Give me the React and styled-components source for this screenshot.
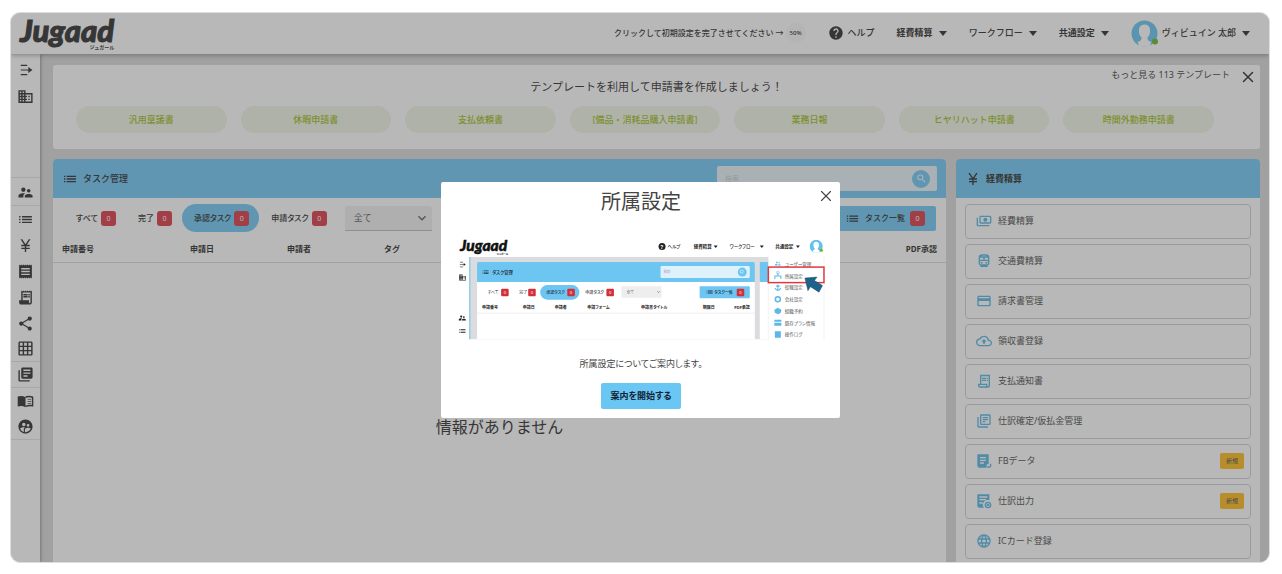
import React from 'react';
import styled, { createGlobalStyle } from 'styled-components';
import { X } from 'lucide-react';
import {
  MdDomain,
  MdSupervisorAccount,
  MdList,
  MdCurrencyYen,
  MdReceipt,
  MdReceiptLong,
  MdOutlineReceiptLong,
  MdShare,
  MdGridOn,
  MdLibraryBooks,
  MdSupervisedUserCircle,
  MdHelp,
  MdOutlinePayments,
  MdOutlineDirectionsTransit,
  MdPayment,
  MdOutlineCloudUpload,
  MdOutlineLibraryBooks,
  MdLanguage,
  MdSearch,
  MdKeyboardArrowDown,
} from 'react-icons/md';

const FbIcon = () => (
  <svg viewBox='0 0 24 24' width='1em' height='1em' fill='none'>
    <path fill='currentColor' d='M2 2h17v15h-3v5H5a3 3 0 0 1-3-3z' />
    <path stroke='#fff' strokeWidth='2' d='M6 7h9M6 11h9M6 15h6' />
    <path stroke='currentColor' strokeWidth='2' d='M17 21h3a2 2 0 0 0 2-2v-3' />
  </svg>
);

const ExportIcon = () => (
  <svg viewBox='0 0 24 24' width='1em' height='1em' fill='none'>
    <path fill='currentColor' d='M2 2h18v9a7 7 0 0 0-8 11H5a3 3 0 0 1-3-3z' />
    <path stroke='#fff' strokeWidth='2' d='M5 6h12M5 10h10M5 15h5' />
    <circle cx='18' cy='18' r='4' stroke='currentColor' strokeWidth='2' />
    <path stroke='currentColor' strokeWidth='2' d='M16 18h4M18 16v4' />
  </svg>
);

const ExpandIcon = () => (
  <svg viewBox='0 0 24 24' width='1em' height='1em' fill='none'>
    <path stroke='currentColor' strokeWidth='2' d='M3 4h11M3 12h14M3 20h11' />
    <path fill='currentColor' d='M16 7l7 5-7 5z' />
  </svg>
);

const BookIcon = () => (
  <svg viewBox='0 0 24 24' width='1em' height='1em' fill='none'>
    <path fill='currentColor' d='M1 5q6-2 11 1v14q-5-3-11-1z' />
    <path stroke='currentColor' strokeWidth='2' d='M12 6q5-2 10 0v12q-5-1-10 1' />
    <path stroke='currentColor' strokeWidth='1' d='M15 9h5M15 12h5M15 15h5' />
  </svg>
);

const Avatar = () => (
  <svg viewBox='0 0 54 54' width='27' height='27'>
    <circle cx='27' cy='27' r='26' fill='#62c2ee' />
    <path
      fill='#fff'
      d='M27 9c-8 0-12 6-11 14 0 6 2 9 5 12 0 5-1 7-8 9l4 9h20l4-9c-7-2-8-4-8-9 3-3 5-6 5-12 1-8-3-14-11-14z'
    />
    <circle cx='48' cy='43' r='6' fill='#62b51f' />
  </svg>
);

const templates = [
  '汎用稟議書',
  '休暇申請書',
  '支払依頼書',
  '[備品・消耗品購入申請書]',
  '業務日報',
  'ヒヤリハット申請書',
  '時間外勤務申請書',
];

const sideLinks = [
  { label: 'ユーザー', icon: <MdSupervisorAccount />, line: true },
  { label: 'タスク', icon: <MdList /> },
  { label: '経費', icon: <MdCurrencyYen /> },
  { label: '領収書', icon: <MdReceipt /> },
  { label: '請求書', icon: <MdReceiptLong /> },
  { label: '共有', icon: <MdShare /> },
  { label: '一覧', icon: <MdGridOn />, line: true },
  { label: '書類', icon: <MdLibraryBooks />, line: true },
  { label: 'マニュアル', icon: <BookIcon /> },
  { label: 'グループ', icon: <MdSupervisedUserCircle />, line: true },
];

const tabs = ['すべて', '完了', '承認タスク', '申請タスク'];

const expenseLinks = [
  { label: '経費精算', icon: <FlippedPayments /> },
  { label: '交通費精算', icon: <MdOutlineDirectionsTransit /> },
  { label: '請求書管理', icon: <MdPayment /> },
  { label: '領収書登録', icon: <MdOutlineCloudUpload /> },
  { label: '支払通知書', icon: <MdOutlineReceiptLong /> },
  { label: '仕訳確定/仮払金管理', icon: <MdOutlineLibraryBooks /> },
  { label: 'FBデータ', icon: <FbIcon />, isNew: true },
  { label: '仕訳出力', icon: <ExportIcon />, isNew: true },
  { label: 'ICカード登録', icon: <MdLanguage /> },
];

// the stack of notes sits on the left side
function FlippedPayments() {
  return (
    <svg viewBox='0 0 24 24' width='1em' height='1em'>
      <g transform='matrix(-1 0 0 1 24 0)'>
        <MdOutlinePayments size='24' />
      </g>
    </svg>
  );
}

// [text, x, y, size, weight, colour]
const tourTexts = [
  ['ヘルプ', 420, 20, 9, 500, '#222'],
  ['経費精算', 472, 20, 9, 700, '#222'],
  ['ワークフロー', 544, 20, 9, 500, '#222'],
  ['共通設定', 635, 20, 9, 700, '#222'],
  ['タスク管理', 70, 71, 9, 500, '#223'],
  ['検索', 412, 70, 7, 400, '#9ab'],
  ['すべて', 61, 111, 8, 400, '#333'],
  ['完了', 124, 111, 8, 400, '#333'],
  ['承認タスク', 178, 111, 8, 500, '#234'],
  ['申請タスク', 256, 111, 8, 500, '#333'],
  ['全て', 338, 111, 8, 400, '#777'],
  ['タスク一覧', 513, 111, 8, 500, '#123'],
  ['申請番号', 50, 142, 8, 700, '#222'],
  ['申請日', 131, 142, 8, 700, '#222'],
  ['申請者', 195, 142, 8, 700, '#222'],
  ['申請フォーム', 260, 142, 8, 700, '#222'],
  ['申請書タイトル', 367, 142, 8, 700, '#222'],
  ['期限日', 490, 142, 8, 700, '#222'],
  ['PDF承認', 553, 142, 8, 700, '#222'],
];

const tourMenu = [
  'ユーザー管理',
  '所属設定',
  '役職設定',
  '会社設定',
  '組織予約',
  '既存プラン情報',
  '操作ログ',
];

const TourPicture = () => (
  <Picture viewBox='0 0 736 204' role='img' aria-label='共通設定メニューの所属設定'>
    <text x='6' y='25' fontFamily='Lato' fontSize='31' fontWeight='900' fontStyle='italic' stroke='#111' fill='#111'>
      Jugaad
    </text>
    <text x='79' y='33' fontSize='5' fontWeight='700'>ジュガール</text>
    <circle cx='409' cy='17' r='7' fill='#222' />
    <text x='406' y='21' fontSize='11' fontWeight='700' fill='#fff'>?</text>
    {[516, 608, 680].map((x) => (
      <path key={x} d={`M${x - 4} 15h8l-4 5z`} fill='#222' />
    ))}
    <svg x='703' y='3' width='27' height='27' viewBox='0 0 27 27'>
      <Avatar />
    </svg>
    <path fill='#dcdcde' d='M24 38h598v164H24z' />
    <path fill='#8fd0ea' d='M24 38h3v164h-3z' />
    <path fill='#fff' d='M40 87h554v115H40zM604 87h18v115h-18z' />
    <path fill='#6dc6f2' d='M40 51a3 3 0 0 1 3-3h548a3 3 0 0 1 3 3v37H40zM604 48h18v40h-18z' />
    <rect x='406' y='56' width='178' height='24' rx='2' fill='#dff1fa' />
    <circle cx='569' cy='68' r='9' fill='#6dc6f2' />
    <circle cx='568' cy='67' r='3' fill='none' stroke='#fff' />
    <rect x='166' y='94' width='78' height='29' rx='14' fill='#6dc6f2' />
    <path fill='#eee' d='M328 96h80v23h-80z' />
    <path fill='none' stroke='#555' d='M399 106l3 3 3-3' />
    <rect x='484' y='96' width='100' height='24' rx='2' fill='#6dc6f2' />
    {[88, 142, 220, 298, 558].map((x) => (
      <g key={x}>
        <rect x={x} y='101' width='15' height='15' rx='2' fill='#d32f3b' />
        <text x={x + 5} y='111' fontSize='8' fill='#fff'>0</text>
      </g>
    ))}
    <path stroke='#ddd' d='M40 150h554' />
    <g color='#234'>
      <MdList x='49' y='60' size='16' />
      <MdList x='496' y='100' size='16' />
    </g>
    <g color='#222' fontSize='14'>
      <svg x='4' y='46' width='14' height='14' viewBox='0 0 14 14'>
        <ExpandIcon />
      </svg>
      <MdDomain x='3' y='71' size='16' />
      <MdSupervisorAccount x='2' y='151' size='17' />
      <MdList x='2' y='177' size='17' />
    </g>
    {tourTexts.map(([text, x, y, size, weight, fill]) => (
      <text key={text} x={x} y={y} fontSize={size} fontWeight={weight} fill={fill}>
        {text}
      </text>
    ))}
    <path fill='#fff' d='M621 36h111v168H621z' />
    <path fill='none' stroke='#e8e8e8' d='M621 36v168M732 36v168' />
    {tourMenu.map((text, i) => (
      <text key={text} x='654' y={Math.round(55 + i * 23.5)} fontSize='9' fill='#555'>
        {text}
      </text>
    ))}
    <g color='#5cb8e6'>
      <MdSupervisorAccount x='633' y='44' size='14' />
      <path stroke='currentColor' fill='none' strokeWidth='2' d='M640 69v7M634 82v-6h12v6M640 93v12M634 100q6 9 12 0M636 96h8' />
      <circle cx='640' cy='69' r='3' fill='none' stroke='currentColor' />
      <circle cx='640' cy='122' r='5' fill='none' stroke='currentColor' strokeWidth='3' />
      <path fill='currentColor' d='M633 143l7-4 7 4-1 6-6 3-6-3zM633 163h14v4h-14zM633 169h14v6h-14zM634 186h12v13h-12z' />
    </g>
    <rect x='621' y='58' width='111' height='31' fill='none' stroke='#e0393e' strokeWidth='3' />
    <path fill='#1d6288' stroke='#184f70' d='M694 80l24-2-5 7 16 10-7 13-17-11-5 8z' />
  </Picture>
);

const Logo = () => (
  <LogoBox href='#'>
    <LogoName>Jugaad</LogoName>
    <LogoSub>ジュガール</LogoSub>
  </LogoBox>
);

const App = () => {
  return (
    <Frame>
      <GlobalStyle />
      <Header>
        <Logo />
        <TopNav>
          <SetupLink href='#'>
            クリックして初期設定を完了させてください →<Progress>50%</Progress>
          </SetupLink>
          <NavButton>
            <MdHelp size={16} />
            ヘルプ
          </NavButton>
          <NavButton $bold>
            経費精算
            <Caret />
          </NavButton>
          <NavButton>
            ワークフロー
            <Caret />
          </NavButton>
          <NavButton $bold>
            共通設定
            <Caret />
          </NavButton>
          <NavButton>
            <Avatar />
            ヴィビュイン 太郎
            <Caret />
          </NavButton>
        </TopNav>
      </Header>
      <Body>
        <Sidebar>
          <SideButton aria-label='メニューを開く' $small>
            <ExpandIcon />
          </SideButton>
          <SideButton aria-label='会社'>
            <MdDomain />
          </SideButton>
          <SideGroup>
            {sideLinks.map(({ label, icon, line }) => (
              <SideButton key={label} aria-label={label} $line={line}>
                {icon}
              </SideButton>
            ))}
          </SideGroup>
        </Sidebar>
        <Main>
          <TemplateCard>
            <TemplateTop>
              <TemplateTitle>テンプレートを利用して申請書を作成しましょう！</TemplateTitle>
              <TemplateMore>
                <MoreLink href='#'>もっと見る 113 テンプレート</MoreLink>
                <IconButton aria-label='閉じる'>
                  <X size={18} />
                </IconButton>
              </TemplateMore>
            </TemplateTop>
            <Chips>
              {templates.map((name) => (
                <Chip key={name}>{name}</Chip>
              ))}
            </Chips>
          </TemplateCard>
          <Columns>
            <Card>
              <CardHeader>
                <MdList size={16} />
                <CardTitle>タスク管理</CardTitle>
                <Search>
                  <SearchInput aria-label='検索' placeholder='検索' />
                  <SearchButton aria-label='検索する'>
                    <MdSearch size={11} />
                  </SearchButton>
                </Search>
              </CardHeader>
              <Toolbar>
                {tabs.map((tab) => (
                  <Tab key={tab} $active={tab === '承認タスク'}>
                    {tab}
                    <Count>0</Count>
                  </Tab>
                ))}
                <SelectBox>
                  <Select aria-label='タグ'>
                    <option>全て</option>
                  </Select>
                  <MdKeyboardArrowDown size={16} />
                </SelectBox>
                <TaskListButton>
                  <MdList size={15} />
                  タスク一覧
                  <Count>0</Count>
                </TaskListButton>
              </Toolbar>
              <Table>
                <thead>
                  <tr>
                    <Th $width='128px'>申請番号</Th>
                    <Th $width='97px'>申請日</Th>
                    <Th $width='97px'>申請者</Th>
                    <Th>タグ</Th>
                    <Th $end>PDF承認</Th>
                  </tr>
                </thead>
                <tbody>
                  <tr>
                    <EmptyCell colSpan={5}>情報がありません</EmptyCell>
                  </tr>
                </tbody>
              </Table>
            </Card>
            <Card>
              <CardHeader>
                <MdCurrencyYen size={16} />
                <CardTitle $bold>経費精算</CardTitle>
              </CardHeader>
              <LinkList>
                {expenseLinks.map(({ label, icon, isNew }) => (
                  <LinkItem key={label} href='#'>
                    <LinkIcon>{icon}</LinkIcon>
                    {label}
                    {isNew && <NewBadge>新規</NewBadge>}
                  </LinkItem>
                ))}
              </LinkList>
            </Card>
          </Columns>
        </Main>
      </Body>
      <Backdrop>
        <Modal role='dialog' aria-labelledby='tour-title'>
          <ModalClose aria-label='閉じる'>
            <X size={18} strokeWidth={1.5} />
          </ModalClose>
          <ModalTitle id='tour-title'>所属設定</ModalTitle>
          <TourPicture />
          <ModalText>所属設定についてご案内します。</ModalText>
          <StartButton>案内を開始する</StartButton>
        </Modal>
      </Backdrop>
    </Frame>
  );
};

export default App;

const GlobalStyle = createGlobalStyle`
  :root {
    --clr-blue: #6ac6f3;
    --clr-text: #222;
    --clr-muted: #555;
    --clr-red: #d9303e;
  }
  * {
    box-sizing: border-box;
  }
  body {
    margin: 0;
    padding: 12px 12px 11px 10px;
    background: #fff;
    color: var(--clr-text);
    font: 9px/14px 'Noto Sans', 'Noto Sans CJK JP', sans-serif;
  }
  button, input, select {
    font: inherit;
    color: inherit;
    border: 0;
    margin: 0;
    padding: 0;
    background: none;
  }
  button {
    cursor: pointer;
  }
  a {
    color: inherit;
    text-decoration: none;
  }
  svg {
    flex-shrink: 0;
  }
`;

const Frame = styled.div`
  position: relative;
  overflow: hidden;
  border: 1px solid #ddd;
  border-radius: 10px;
  background: #d9d9d9;
`;

const Header = styled.header`
  display: flex;
  align-items: center;
  justify-content: space-between;
  height: 41px;
  padding: 0 19px 1px 9px;
  background: #fff;
  /* keeps the shadow above the page body */
  position: relative;
  z-index: 1;
  box-shadow: 0 1px 5px rgba(0, 0, 0, 0.4);
`;

const LogoBox = styled.a`
  display: flex;
  flex-direction: column;
  align-items: flex-end;
`;

const LogoName = styled.span`
  font: italic 900 31px/28px Lato, sans-serif;
  -webkit-text-stroke: 1px currentColor;
`;

const LogoSub = styled.span`
  font-size: 5px;
  font-weight: 700;
  line-height: 6px;
`;

const TopNav = styled.nav`
  display: flex;
  align-items: center;
  gap: 22px;
`;

const SetupLink = styled.a`
  display: flex;
  align-items: center;
  gap: 2px;
  font-size: 8px;
  font-weight: 500;
`;

const Progress = styled.span`
  width: 20px;
  height: 20px;
  border-radius: 50%;
  background: #f8f8f8;
  font-size: 6px;
  line-height: 20px;
  text-align: center;
`;

const NavButton = styled.button`
  display: flex;
  align-items: center;
  gap: 4px;
  font-weight: ${({ $bold }) => ($bold ? 700 : 500)};
`;

const Caret = styled.span`
  margin-left: 2px;
  border: 4px solid transparent;
  border-top: 5px solid currentColor;
  border-bottom: 0;
`;

const Body = styled.div`
  display: flex;
`;

const Sidebar = styled.aside`
  flex: 0 0 29px;
  padding-top: 3px;
  background: #fff;
  box-shadow: 1px 0 3px rgba(0, 0, 0, 0.35);
`;

const SideButton = styled.button`
  display: flex;
  align-items: center;
  justify-content: center;
  width: 100%;
  height: 26px;
  font-size: ${({ $small }) => ($small ? '14px' : '17px')};
  border-bottom: ${({ $line }) => ($line ? '1px solid #e4e4e4' : '0')};
`;

const SideGroup = styled.div`
  margin-top: 68px;
  padding-top: 2px;
  border-top: 1px solid #e4e4e4;
`;

const Main = styled.main`
  flex: 1;
  min-width: 0;
  padding: 11px 9px 0 13px;
  display: grid;
  gap: 10px;
`;

const TemplateCard = styled.section`
  padding: 3px 46px 16px 23px;
  border-radius: 3px;
  background: #fff;
`;

const TemplateTop = styled.div`
  display: grid;
  grid-template-columns: 1fr auto 1fr;
  margin: 0 -43px 0 -20px;
`;

const TemplateTitle = styled.h2`
  grid-column: 2;
  margin: 11px 0 0;
  font-size: 11px;
  font-weight: 400;
  line-height: 16px;
`;

const TemplateMore = styled.div`
  display: flex;
  align-items: flex-start;
  justify-content: flex-end;
  gap: 9px;
`;

const MoreLink = styled.a`
  color: #333;
`;

const IconButton = styled.button`
  display: flex;
`;

const Chips = styled.div`
  display: grid;
  grid-template-columns: repeat(7, 1fr);
  gap: 14px;
  margin-top: 11px;
`;

const Chip = styled.button`
  height: 27px;
  border-radius: 14px;
  background: #f0f5e6;
  color: #98bb10;
  font-weight: 500;
`;

const Columns = styled.div`
  display: grid;
  grid-template-columns: minmax(0, 1fr) 304px;
  gap: 10px;
`;

const Card = styled.section`
  border-radius: 4px 4px 0 0;
  background: #fff;
  overflow: hidden;
`;

const CardHeader = styled.div`
  display: flex;
  align-items: center;
  gap: 5px;
  height: 39px;
  padding: 0 9px;
  background: var(--clr-blue);
`;

const CardTitle = styled.h2`
  margin: 0;
  font-size: 9px;
  font-weight: ${({ $bold }) => ($bold ? 700 : 500)};
`;

const Search = styled.div`
  display: flex;
  align-items: center;
  width: 220px;
  height: 25px;
  margin-left: auto;
  padding: 0 7px 0 8px;
  border-radius: 2px;
  background: #e8f4fa;
`;

const SearchInput = styled.input`
  flex: 1;
  min-width: 0;
  font-size: 7px;
  outline: none;
  &::placeholder {
    color: #c0ccd2;
  }
`;

const SearchButton = styled.button`
  display: flex;
  align-items: center;
  justify-content: center;
  width: 18px;
  height: 18px;
  border-radius: 50%;
  background: var(--clr-blue);
  color: #fff;
`;

const Toolbar = styled.div`
  display: flex;
  align-items: center;
  padding: 6px 10px 5px 11px;
`;

const Tab = styled.button`
  display: flex;
  align-items: center;
  gap: 3px;
  height: 28px;
  padding: 0 10px 0 12px;
  border-radius: 14px;
  background: ${({ $active }) => ($active ? 'var(--clr-blue)' : 'none')};
  font-size: 8px;
  font-weight: 500;
  font-feature-settings: 'palt';
`;

const Count = styled.span`
  width: 15px;
  height: 15px;
  border-radius: 3px;
  background: var(--clr-red);
  color: #fff;
  font-size: 7px;
  font-weight: 400;
  line-height: 15px;
  text-align: center;
`;

const SelectBox = styled.div`
  display: flex;
  align-items: center;
  width: 87px;
  height: 25px;
  margin-left: 8px;
  padding: 0 2px 0 9px;
  border-bottom: 1px solid #bbb;
  border-radius: 3px 3px 0 0;
  background: #f0f0f0;
  color: var(--clr-muted);
`;

const Select = styled.select`
  flex: 1;
  min-width: 0;
  appearance: none;
`;

const TaskListButton = styled.button`
  display: flex;
  align-items: center;
  gap: 5px;
  height: 25px;
  margin-left: auto;
  padding: 0 11px 0 18px;
  border-radius: 2px;
  background: var(--clr-blue);
  font-size: 8px;
  font-weight: 500;
`;

const Table = styled.table`
  width: 100%;
  border-collapse: collapse;
  table-layout: fixed;
`;

const Th = styled.th`
  width: ${({ $width }) => $width || 'auto'};
  height: 25px;
  padding: 0 9px;
  border-bottom: 1px solid #d8d8d8;
  font-size: 8px;
  font-weight: 700;
  text-align: ${({ $end }) => ($end ? 'right' : 'left')};
`;

const EmptyCell = styled.td`
  padding: 152px 0 0;
  font-size: 16px;
  line-height: 24px;
  text-align: center;
`;

const LinkList = styled.div`
  display: grid;
  gap: 5px;
  padding: 6px 9px 3px;
`;

const LinkItem = styled.a`
  display: flex;
  align-items: center;
  gap: 6px;
  height: 35px;
  padding: 0 6px 1px 10px;
  border: 1px solid #ccc;
  border-radius: 4px;
  color: #444;
`;

const LinkIcon = styled.span`
  display: flex;
  color: #4fb4e4;
  font-size: 16px;
`;

const NewBadge = styled.span`
  width: 24px;
  height: 16px;
  margin-left: auto;
  border-radius: 2px;
  background: #ffb812;
  font-size: 6px;
  line-height: 16px;
  text-align: center;
`;

/* covers the whole frame */
const Backdrop = styled.div`
  position: absolute;
  inset: 0;
  z-index: 2;
  display: flex;
  align-items: center;
  justify-content: center;
  padding-top: 25px;
  background: rgba(82, 82, 82, 0.41);
`;

const Modal = styled.section`
  position: relative;
  display: flex;
  flex-direction: column;
  align-items: center;
  width: 399px;
  padding: 6px 14px 9px 16px;
  border-radius: 2px;
  background: #fff;
  color: #444;
  font-feature-settings: 'palt';
`;

const ModalClose = styled.button`
  position: absolute;
  top: 5px;
  right: 5px;
  display: flex;
`;

const ModalTitle = styled.h1`
  margin: 0 0 22px;
  font-size: 20px;
  font-weight: 400;
  line-height: 28px;
`;

const Picture = styled.svg`
  width: 100%;
  overflow: visible;
`;

const ModalText = styled.p`
  margin: 17px 0 12px;
`;

const StartButton = styled.button`
  padding: 6px 9px;
  border-radius: 2px;
  background: var(--clr-blue);
  color: #123;
  font-weight: 700;
`;
